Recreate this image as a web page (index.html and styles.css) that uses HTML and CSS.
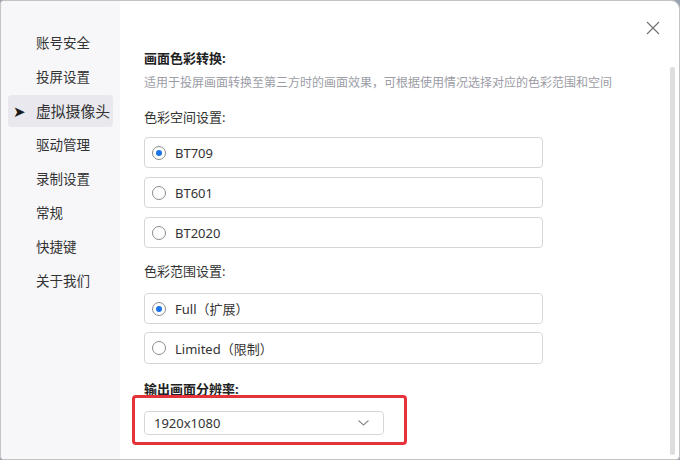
FILE: index.html
```html
<!DOCTYPE html>
<html lang="zh-CN">
<head>
<meta charset="utf-8">
<title>设置</title>
<link rel="stylesheet" href="styles.css">
</head>
<body>
<div class="window">
  <aside class="sidebar">
    <div class="nav-item">账号安全</div>
    <div class="nav-item">投屏设置</div>
    <div class="nav-item active"><span class="arrow">➤</span>虚拟摄像头</div>
    <div class="nav-item">驱动管理</div>
    <div class="nav-item">录制设置</div>
    <div class="nav-item">常规</div>
    <div class="nav-item">快捷键</div>
    <div class="nav-item">关于我们</div>
  </aside>
  <main class="main">
    <button class="close" aria-label="关闭">
      <svg width="14" height="14" viewBox="0 0 14 14"><path d="M1 1 L13 13 M13 1 L1 13" stroke="#707070" stroke-width="1.1" fill="none"/></svg>
    </button>
    <div class="scrollbar"></div>
    <h2 class="title">画面色彩转换:</h2>
    <p class="desc">适用于投屏画面转换至第三方时的画面效果，可根据使用情况选择对应的色彩范围和空间</p>

    <h3 class="subtitle first">色彩空间设置:</h3>
    <div class="options">
      <label class="option"><span class="radio checked"></span>BT709</label>
      <label class="option"><span class="radio"></span>BT601</label>
      <label class="option"><span class="radio"></span>BT2020</label>
    </div>

    <h3 class="subtitle second">色彩范围设置:</h3>
    <div class="options">
      <label class="option"><span class="radio checked"></span>Full（扩展）</label>
      <label class="option"><span class="radio"></span>Limited（限制）</label>
    </div>

    <div class="output">
      <h2 class="title out-title">输出画面分辨率:</h2>
      <div class="select">
        <span>1920x1080</span>
        <svg width="11" height="6" viewBox="0 0 11 6"><path d="M0.5 0.5 L5.5 5 L10.5 0.5" stroke="#8a8a8a" stroke-width="1.1" fill="none"/></svg>
      </div>
      <div class="highlight"></div>
    </div>
  </main>
</div>
</body>
</html>
```
FILE: styles.css
```css
* { box-sizing: border-box; }
html, body {
  margin: 0;
  padding: 0;
}
body {
  width: 680px;
  height: 460px;
  overflow: hidden;
  background: #9aa3b0;
  font-family: "Noto Sans", "Noto Sans CJK SC", sans-serif;
  color: #333;
}
.window {
  width: 680px;
  height: 460px;
  display: flex;
  background: #fff;
  border: 1px solid #c4c4c4;
  border-radius: 4px 9px 4px 4px;
  overflow: hidden;
}
.sidebar {
  width: 119px;
  flex: none;
  background: #f7f7fa;
  padding: 26px 7px 0 7px;
  display: flex;
  flex-direction: column;
  gap: 2px;
}
.nav-item {
  position: relative;
  height: 32px;
  line-height: 32px;
  padding-left: 28px;
  font-size: 13.5px;
  color: #333;
  border-radius: 4px;
}
.nav-item.active {
  background: #e8e8ee;
  font-size: 14.8px;
}
.arrow {
  position: absolute;
  left: 5px;
  top: 0;
  font-size: 15px;
  color: #1a1a1a;
}
.main {
  position: relative;
  flex: 1;
  padding: 47px 0 0 24px;
}
.close {
  position: absolute;
  right: 19px;
  top: 20px;
  width: 14px;
  height: 14px;
  padding: 0;
  border: 0;
  background: none;
  line-height: 0;
}
.scrollbar {
  position: absolute;
  right: 4px;
  top: 66px;
  bottom: 4px;
  width: 5px;
  background: #dedede;
  border-radius: 2px;
}
.title {
  margin: 0;
  font-size: 13px;
  line-height: 20px;
  font-weight: 700;
  color: #222;
}
.desc {
  margin: 6px 0 0;
  font-size: 12px;
  line-height: 18px;
  color: #9c9ca6;
}
.subtitle {
  margin: 0;
  font-size: 13px;
  line-height: 20px;
  font-weight: 400;
  color: #333;
}
.subtitle.first { margin-top: 15px; }
.subtitle.second { margin-top: 13px; }
.options {
  margin-top: 10px;
  display: flex;
  flex-direction: column;
  gap: 9px;
  width: 399px;
}
.subtitle.second + .options { margin-top: 12px; gap: 8px; }
.option {
  height: 31px;
  display: flex;
  align-items: center;
  padding-left: 7px;
  border: 1px solid #d6d6d6;
  border-radius: 4px;
  font-size: 13px;
  color: #333;
}
.subtitle.second + .options .option:last-child { height: 32px; }
.radio {
  width: 14px;
  height: 14px;
  border: 1px solid #8c8c8c;
  border-radius: 50%;
  margin-right: 9px;
  flex: none;
  display: flex;
  align-items: center;
  justify-content: center;
}
.radio.checked::after {
  content: "";
  width: 6px;
  height: 6px;
  border-radius: 50%;
  background: #1a73e8;
}
.output {
  position: relative;
  margin-top: 15px;
}
.select {
  margin-top: 12px;
  width: 240px;
  height: 24px;
  border: 1px solid #d6d6d6;
  border-radius: 4px;
  display: flex;
  align-items: center;
  justify-content: space-between;
  padding: 0 14px 0 9px;
  font-size: 13px;
  color: #333;
}
.highlight {
  position: absolute;
  left: -12px;
  top: 16px;
  width: 275px;
  height: 50px;
  border: 3px solid #e5333b;
  border-radius: 4px;
}
```
